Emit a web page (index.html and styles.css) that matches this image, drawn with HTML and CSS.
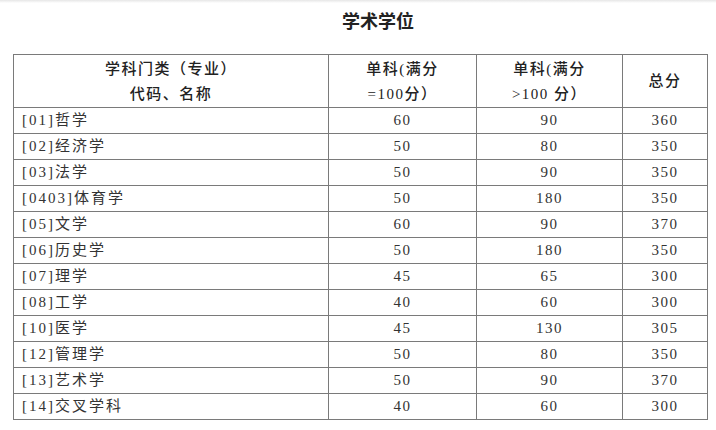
FILE: index.html
```html
<!DOCTYPE html>
<html lang="zh">
<head>
<meta charset="utf-8">
<link rel="stylesheet" href="styles.css">
</head>
<body>
<div class="topbar"></div>
<h1 class="title">学术学位</h1>
<table class="scores">
  <colgroup>
    <col class="c1"><col class="c2"><col class="c3"><col class="c4">
  </colgroup>
  <thead>
    <tr>
      <th>学科门类（专业）<br>代码、名称</th>
      <th>单科(满分<br>=100分）</th>
      <th>单科(满分<br>&gt;100 分）</th>
      <th>总分</th>
    </tr>
  </thead>
  <tbody>
    <tr><td class="name">[01]哲学</td><td>60</td><td>90</td><td>360</td></tr>
    <tr><td class="name">[02]经济学</td><td>50</td><td>80</td><td>350</td></tr>
    <tr><td class="name">[03]法学</td><td>50</td><td>90</td><td>350</td></tr>
    <tr><td class="name">[0403]体育学</td><td>50</td><td>180</td><td>350</td></tr>
    <tr><td class="name">[05]文学</td><td>60</td><td>90</td><td>370</td></tr>
    <tr><td class="name">[06]历史学</td><td>50</td><td>180</td><td>350</td></tr>
    <tr><td class="name">[07]理学</td><td>45</td><td>65</td><td>300</td></tr>
    <tr><td class="name">[08]工学</td><td>40</td><td>60</td><td>300</td></tr>
    <tr><td class="name">[10]医学</td><td>45</td><td>130</td><td>305</td></tr>
    <tr><td class="name">[12]管理学</td><td>50</td><td>80</td><td>350</td></tr>
    <tr><td class="name">[13]艺术学</td><td>50</td><td>90</td><td>370</td></tr>
    <tr><td class="name">[14]交叉学科</td><td>40</td><td>60</td><td>300</td></tr>
  </tbody>
</table>
</body>
</html>
```
FILE: styles.css
```css
html, body {
  margin: 0;
  padding: 0;
  background: #fff;
}
body {
  width: 716px;
  height: 430px;
  overflow: hidden;
  font-family: "Liberation Serif", "Noto Sans CJK SC", serif;
  color: #333;
}
.topbar {
  height: 3px;
  background: linear-gradient(#e6e6e6, #fff);
}
.title {
  margin: 6px 0 0 0;
  padding-left: 40px;
  height: 45px;
  text-align: center;
  font-family: "Noto Sans CJK SC", sans-serif;
  font-size: 18px;
  line-height: 22px;
  font-weight: 700;
  color: #222;
}
.scores {
  margin-left: 13px;
  border-collapse: collapse;
  table-layout: fixed;
  width: 694px;
}
.c1 { width: 315px; }
.c2 { width: 148px; }
.c3 { width: 146px; }
.c4 { width: 85px; }
.scores th, .scores td {
  border: 1px solid #7a7a7a;
  padding: 0;
  text-align: center;
  font-weight: 400;
  font-size: 15px;
  letter-spacing: 1.5px;
}
.scores th {
  height: 51px;
  line-height: 25px;
  font-family: "Liberation Serif", "Noto Sans CJK SC", serif;
  font-weight: 500;
  color: #222;
  padding-top: 1px;
}
.scores td {
  height: 25px;
  line-height: 25px;
}
.scores td.name {
  text-align: left;
  padding-left: 8px;
  letter-spacing: 2px;
}
```
